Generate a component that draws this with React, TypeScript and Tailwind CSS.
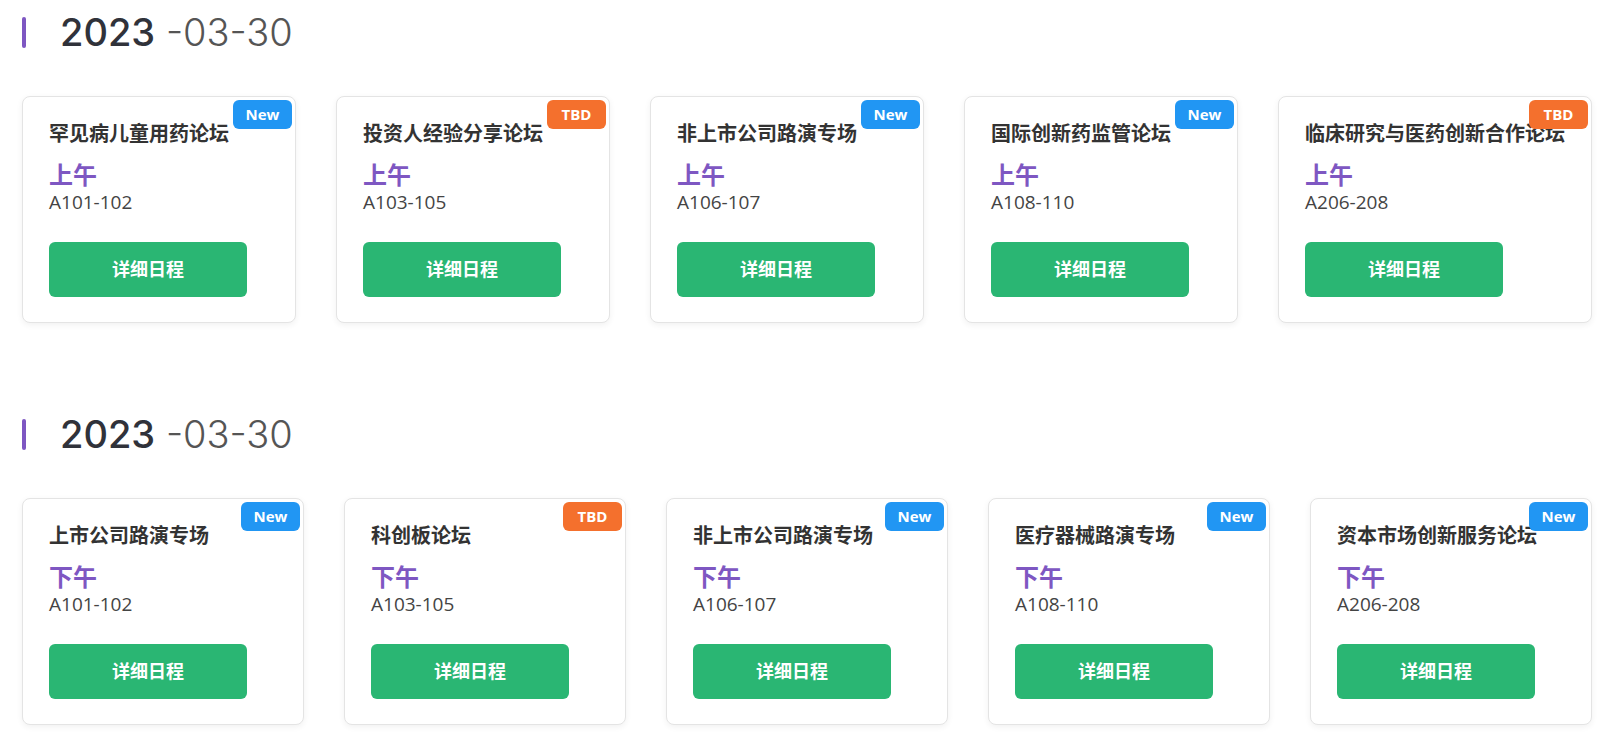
type Session = {
  title: string;
  room: string;
  tag: 'New' | 'TBD';
};

interface DayBlock {
  year: string;
  date: string;
  period: string;
  sessions: Session[];
}

const days: DayBlock[] = [
  {
    year: '2023',
    date: '-03-30',
    period: '上午',
    sessions: [
      { title: '罕见病儿童用药论坛', room: 'A101-102', tag: 'New' },
      { title: '投资人经验分享论坛', room: 'A103-105', tag: 'TBD' },
      { title: '非上市公司路演专场', room: 'A106-107', tag: 'New' },
      { title: '国际创新药监管论坛', room: 'A108-110', tag: 'New' },
      { title: '临床研究与医药创新合作论坛', room: 'A206-208', tag: 'TBD' },
    ],
  },
  {
    year: '2023',
    date: '-03-30',
    period: '下午',
    sessions: [
      { title: '上市公司路演专场', room: 'A101-102', tag: 'New' },
      { title: '科创板论坛', room: 'A103-105', tag: 'TBD' },
      { title: '非上市公司路演专场', room: 'A106-107', tag: 'New' },
      { title: '医疗器械路演专场', room: 'A108-110', tag: 'New' },
      { title: '资本市场创新服务论坛', room: 'A206-208', tag: 'New' },
    ],
  },
];

function SessionCard({ session, period }: { readonly session: Session; readonly period: string }) {
  const isNew = session.tag === 'New';
  return (
    <div className="relative flex-1 rounded-lg border border-[#e4e4e4] bg-white px-[26px] pt-[23px] pb-[25px] shadow-[0_2px_6px_rgba(0,0,0,0.06)]">
      <span
        className={`absolute top-[3px] right-[3px] flex h-[29px] w-[59px] items-center justify-center rounded-md text-[15px] font-bold text-white ${
          isNew ? 'bg-[#2196f3]' : 'bg-[#f4702d]'
        }`}
      >
        {session.tag}
      </span>
      <div className="whitespace-nowrap text-[20px] font-bold leading-[28px] text-[#333333]">{session.title}</div>
      <div className="mt-[13px] text-[24px] font-bold leading-[28px] text-[#7e57c2]">{period}</div>
      <div className="text-[19px] leading-[26px] text-[#444444]">{session.room}</div>
      <button
        type="button"
        className="mt-[27px] flex h-[55px] w-[198px] items-center justify-center rounded-md bg-[#2ab673] text-[18px] font-bold text-white"
      >
        详细日程
      </button>
    </div>
  );
}

export default function App() {
  return (
    <div
      className="min-h-screen bg-white pt-[12px] pl-[22px] pr-[8px]"
      style={{ fontFamily: "'Open Sans', 'Noto Sans CJK SC', sans-serif" }}
    >
      {days.map((day, i) => (
        <section key={i} className={i > 0 ? 'mt-[91px]' : ''}>
          <div className="flex h-[40px] items-center">
            <span className="h-[31px] w-1 rounded-full bg-[#7e57c2]" />
            <h2
              className="ml-[34px] text-[38px] leading-[40px] whitespace-nowrap"
              style={{ fontFamily: "Inter, 'Noto Sans', sans-serif" }}
            >
              <span className="font-medium text-[#30323a]">{day.year}</span>{' '}
              <span className="font-light text-[#555555]">{day.date}</span>
            </h2>
          </div>
          <div className="mt-[44px] flex gap-10">
            {day.sessions.map((s, j) => (
              <SessionCard key={j} session={s} period={day.period} />
            ))}
          </div>
        </section>
      ))}
    </div>
  );
}
